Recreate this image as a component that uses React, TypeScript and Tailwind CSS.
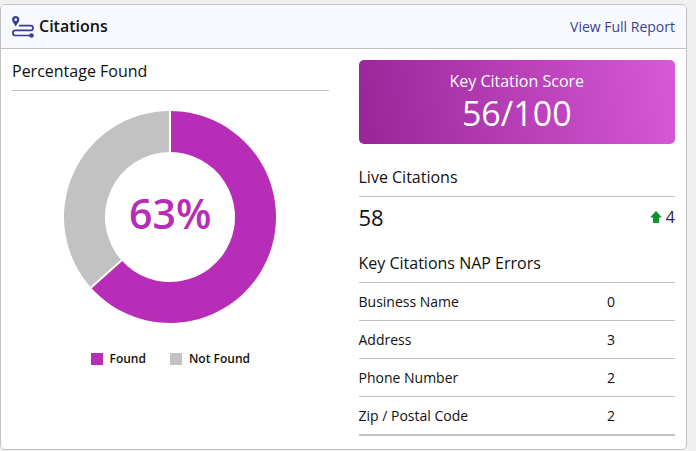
import React from "react";

const NAP_ERRORS = [
  { label: "Business Name", count: 0 },
  { label: "Address", count: 3 },
  { label: "Phone Number", count: 2 },
  { label: "Zip / Postal Code", count: 2 },
];

const LEGEND = [
  { label: "Found", swatch: "bg-[#b82db8]" },
  { label: "Not Found", swatch: "bg-[#c2c2c2]" },
];

const RouteIcon = () => (
  <svg className="h-[22px] w-[22px]" viewBox="0 0 22 22" fill="none" aria-hidden="true">
    <path
      d="M3.7 0C1.6 0 0 1.6 0 3.6 0 6 2.2 7.6 3.7 10.6 5.2 7.6 7.4 6 7.4 3.6 7.4 1.6 5.8 0 3.7 0Zm0 2.3a1.4 1.4 0 1 1 0 2.8 1.4 1.4 0 0 1 0-2.8Z"
      fill="#3b3b91"
      fillRule="evenodd"
    />
    <path
      d="M7 9.7h11.7a2.35 2.35 0 0 1 0 4.7H3.4a2.5 2.5 0 0 0 0 5.1H19"
      stroke="#3b3b91"
      strokeWidth="1.7"
    />
    <circle cx="19.5" cy="19.5" r="2.3" fill="#3b3b91" />
  </svg>
);

const UpArrow = () => (
  <svg className="h-3 w-3" viewBox="0 0 12 12" aria-hidden="true">
    <path d="M6 0 12 6.5H9V12H3V6.5H0Z" fill="#0b9428" />
  </svg>
);

const point = (radius: number, angle: number) =>
  `${(106 + radius * Math.sin(angle)).toFixed(2)} ${(106 - radius * Math.cos(angle)).toFixed(2)}`;

const slice = (from: number, to: number) => {
  const a = from * Math.PI * 2;
  const b = to * Math.PI * 2;
  const large = to - from > 0.5 ? 1 : 0;
  return `M${point(106, a)}A106 106 0 ${large} 1 ${point(106, b)}L${point(65, b)}A65 65 0 ${large} 0 ${point(65, a)}Z`;
};

const cut = (at: number) => `M${point(63, at * Math.PI * 2)}L${point(108, at * Math.PI * 2)}`;

interface DonutProps {
  share: number;
  text: string;
}

const Donut = ({ share, text }: DonutProps) => (
  <div className="grid place-items-center">
    <svg className="col-start-1 row-start-1 h-[212px] w-[212px]" viewBox="0 0 212 212" aria-hidden="true">
      <path d={slice(0, share)} fill="#b82db8" />
      <path d={slice(share, 1)} fill="#c2c2c2" />
      <path d={cut(0) + cut(share)} stroke="#fff" strokeWidth="2" />
    </svg>
    <span className="col-start-1 row-start-1 pb-2 text-[41px] leading-10 font-semibold text-[#b82db8]">{text}</span>
  </div>
);

const SectionTitle = ({ children }: { children: React.ReactNode }) => (
  <h3 className="border-b border-[#c2c2c2] pb-[7px] text-base leading-6">{children}</h3>
);

export default function App() {
  return (
    <div className="bg-[#f0f0f0] pt-1 pr-[9px] pb-px font-['Open_Sans',sans-serif] text-[#111]">
      <section className="rounded-[5px] border border-[#c2c2c2] bg-white">
        <header className="flex h-11 items-center justify-between rounded-t border-b border-[#c2c2c2] bg-[#f8f9fe] px-[11px]">
          <h2 className="flex items-center gap-[5px] text-base leading-6 font-semibold">
            <RouteIcon />
            <span className="pb-0.5">Citations</span>
          </h2>
          <a href="#report" className="text-sm text-[#3b4390]">
            View Full Report
          </a>
        </header>

        <div className="grid grid-cols-2 gap-[30px] px-[11px] pt-[10px] pb-[13px]">
          <div>
            <SectionTitle>Percentage Found</SectionTitle>
            <div className="pt-5">
              <Donut share={0.634} text="63%" />
            </div>
            <ul className="mt-7 flex justify-center gap-6 text-xs font-semibold">
              {LEGEND.map(({ label, swatch }) => (
                <li key={label} className="flex items-center gap-[7px]">
                  <span className={`h-3 w-3 ${swatch}`} />
                  {label}
                </li>
              ))}
            </ul>
          </div>

          <div className="pt-px">
            <div className="flex h-[84px] flex-col items-center rounded-[5px] bg-linear-[80deg,#982598,#d759d7] pt-[9px] text-white">
              <span className="text-base leading-6">Key Citation Score</span>
              <span className="text-[34px] leading-10">56/100</span>
            </div>

            <div className="mt-[21px]">
              <SectionTitle>Live Citations</SectionTitle>
            </div>
            <div className="flex h-10 items-center justify-between">
              <span className="text-[22px]">58</span>
              <span className="flex items-center gap-1 text-base leading-6 text-[#1f1b4d]">
                <UpArrow />4
              </span>
            </div>

            <div className="mt-[14px]">
              <SectionTitle>Key Citations NAP Errors</SectionTitle>
            </div>
            <div className="border-b border-[#c2c2c2]">
              <table className="w-full border-separate border-spacing-0 text-sm">
                <tbody>
                  {NAP_ERRORS.map(({ label, count }) => (
                    <tr key={label} className="h-[38px]">
                      <th scope="row" className="border-b border-[#c2c2c2] text-left font-normal">
                        {label}
                      </th>
                      <td className="w-[68px] border-b border-[#c2c2c2]">{count}</td>
                    </tr>
                  ))}
                </tbody>
              </table>
            </div>
          </div>
        </div>
      </section>
    </div>
  );
}
